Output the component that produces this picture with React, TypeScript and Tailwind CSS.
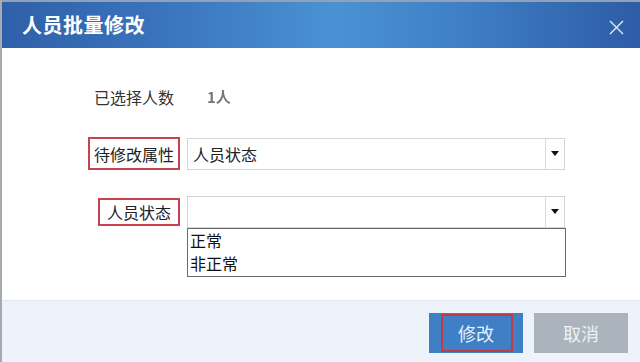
import React from "react";

const font = { fontFamily: '"Noto Sans CJK SC", "Noto Sans", sans-serif' };

function Arrow() {
  return (
    <div className="w-[19px] h-full border-l border-[#dcdcdc] flex items-center justify-center">
      <svg width="8" height="5" viewBox="0 0 8 5">
        <path d="M0 0 L8 0 L4 5 Z" fill="#111" />
      </svg>
    </div>
  );
}

export default function App() {
  return (
    <div
      className="w-[640px] h-[362px] flex flex-col bg-white border-l-2 border-[#a7abb1] overflow-hidden"
      style={font}
    >
      <div
        className="h-[48px] shrink-0 border-t-2 border-[#8fa2b8] flex items-center justify-between pl-[20px] pr-[16px]"
        style={{
          background:
            "linear-gradient(to right, #2f60a9 0%, #3a74bd 25%, #4a92d3 52%, #3f7fc5 72%, #2d5ca6 100%)",
        }}
      >
        <span className="text-[20px] leading-none font-bold text-white tracking-[0.5px]">人员批量修改</span>
        <svg width="15" height="15" viewBox="0 0 15 15" className="mt-[4px]">
          <path d="M1 1 L14 14 M14 1 L1 14" stroke="#e4ecf7" strokeWidth="1.4" />
        </svg>
      </div>

      <div className="flex-1 relative flex flex-col pt-[37px]">
        <div className="flex items-center h-[24px]">
          <div className="w-[178px] flex justify-end">
            <span className="px-[6px] text-[16px] leading-[24px] text-[#333]">已选择人数</span>
          </div>
          <span className="ml-[27px] text-[15px] leading-[24px] text-[#777] blur-[0.7px] font-bold">1人</span>
        </div>

        <div className="flex items-center mt-[28px] h-[33px]">
          <div className="w-[178px] flex justify-end">
            <div className="h-[33px] border-2 border-[#c8424f] px-[4px] flex items-center text-[16px] text-[#222]">
              待修改属性
            </div>
          </div>
          <div className="ml-[7px] w-[378px] h-[32px] border border-[#d4d4d4] flex items-stretch">
            <div className="flex-1 flex items-center pl-[5px] text-[16px] text-[#222]">人员状态</div>
            <Arrow />
          </div>
        </div>

        <div className="flex items-center mt-[26px] h-[31px]">
          <div className="w-[178px] flex justify-end">
            <div className="h-[28px] border-2 border-[#c8424f] px-[7px] flex items-center text-[16px] text-[#222]">
              人员状态
            </div>
          </div>
          <div className="ml-[7px] w-[378px] h-[32px] border border-[#d4d4d4] flex items-stretch relative">
            <div className="flex-1" />
            <Arrow />
            <div className="absolute left-[-1px] top-[31px] w-[379px] h-[49px] border border-[#6a6a6a] bg-white pl-[2px] text-[16px] leading-[23px] text-[#111]">
              <div>正常</div>
              <div>非正常</div>
            </div>
          </div>
        </div>
      </div>

      <div className="h-[62px] shrink-0 bg-[#eef2fa] border-t border-[#e2e6ed] flex justify-end items-start pt-[12px] pr-[12px] gap-[11px]">
        <div className="relative w-[94px] h-[40px] bg-[#3e7fc5] flex items-center justify-center text-[18px] text-[#e8f0fa]">
          修改
          <div className="absolute left-[12px] top-[1px] w-[72px] h-[38px] border-2 border-[#c23a44]" />
        </div>
        <div className="w-[94px] h-[40px] bg-[#abb4bd] flex items-center justify-center text-[18px] text-[#eef1f4]">
          取消
        </div>
      </div>
    </div>
  );
}
